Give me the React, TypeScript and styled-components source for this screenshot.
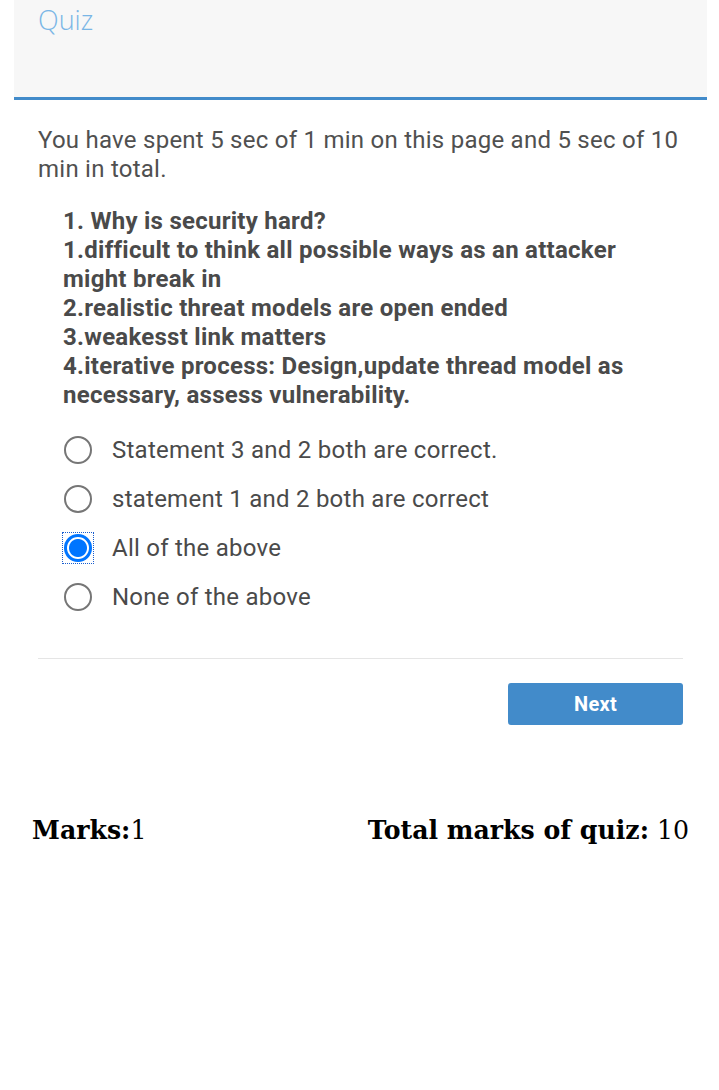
import React, { useState } from "react";
import styled, { createGlobalStyle } from "styled-components";

const GlobalStyle = createGlobalStyle`
  html, body {
    margin: 0;
    padding: 0;
    background: #ffffff;
  }
  body {
    font-family: Roboto, "Noto Sans", sans-serif;
  }
`;

const Page = styled.div`
  width: 719px;
  min-height: 1090px;
  background: #ffffff;
`;

const Panel = styled.div`
  margin: 0 12px 0 14px;
`;

const Header = styled.div`
  height: 97px;
  background: #f7f7f7;
  border-bottom: 3px solid #428bca;
  padding: 0 24px;
  box-sizing: content-box;
`;

const Title = styled.h1`
  margin: 0;
  padding-top: 2px;
  font-family: "Open Sans", sans-serif;
  font-weight: 300;
  font-size: 27px;
  line-height: 36px;
  color: #7ab6e6;
`;

const Body = styled.div`
  padding: 26px 24px 0;
`;

const Timer = styled.p`
  margin: 0;
  font-size: 24px;
  letter-spacing: 0.25px;
  line-height: 29px;
  color: #505050;
`;

const Question = styled.div`
  margin: 23px 0 0 25px;
  font-size: 24px;
  letter-spacing: 0.26px;
  line-height: 29px;
  font-weight: 700;
  color: #4a4a4a;
`;

const Options = styled.div`
  margin: 15px 0 0 25px;
  display: flex;
  flex-direction: column;
`;

const OptionRow = styled.label`
  display: flex;
  align-items: center;
  height: 49px;
  gap: 19px;
  font-size: 24px;
  letter-spacing: 0.25px;
  color: #4a4a4a;
  cursor: pointer;
`;

const RadioBox = styled.span`
  display: flex;
  padding: 1px;
  flex: none;

  &:focus-within {
    outline: 1px dotted #1a5fd0;
  }
`;

const Radio = styled.input`
  appearance: none;
  margin: 0;
  width: 28px;
  height: 28px;
  border-radius: 50%;
  border: 2px solid #767676;
  box-sizing: border-box;
  background: #fff;
  outline: none;

  &:checked {
    border: 3px solid #0075ff;
    background: radial-gradient(circle, #0075ff 0 8.5px, #ffffff 9.5px);
  }
`;

const Divider = styled.hr`
  margin: 37px 0 0;
  border: none;
  border-top: 1px solid #e5e5e5;
  height: 0;
`;

const Actions = styled.div`
  display: flex;
  justify-content: flex-end;
  margin-top: 24px;
`;

const NextButton = styled.button`
  width: 175px;
  height: 42px;
  border: none;
  border-radius: 3px;
  background: #428bca;
  color: #ffffff;
  font-family: Roboto, sans-serif;
  font-weight: 700;
  font-size: 20px;
  letter-spacing: 0.3px;
  cursor: pointer;
`;

const Footer = styled.div`
  display: flex;
  justify-content: space-between;
  align-items: baseline;
  margin-top: 90px;
  padding: 0 30px 0 32px;
  font-family: "DejaVu Serif", serif;
  font-size: 25.2px;
  color: #000;
`;

const Label = styled.b`
  font-weight: 700;
`;

const options = [
  "Statement 3 and 2 both are correct.",
  "statement 1 and 2 both are correct",
  "All of the above",
  "None of the above",
];

export default function App() {
  const [selected, setSelected] = useState(2);
  return (
    <Page>
      <GlobalStyle />
      <Panel>
        <Header>
          <Title>Quiz</Title>
        </Header>
        <Body>
          <Timer>
            You have spent 5 sec of 1 min on this page and 5 sec of 10 min in
            total.
          </Timer>
          <Question>
            1. Why is security hard?
            <br />
            1.difficult to think all possible ways as an attacker might break
            in
            <br />
            2.realistic threat models are open ended
            <br />
            3.weakesst link matters
            <br />
            4.iterative process: Design,update thread model as necessary,
            assess vulnerability.
          </Question>
          <Options>
            {options.map((o, i) => (
              <OptionRow key={o}>
                <RadioBox>
                  <Radio
                    type="radio"
                    name="answer"
                    checked={selected === i}
                    onChange={() => setSelected(i)}
                    autoFocus={i === 2}
                  />
                </RadioBox>
                {o}
              </OptionRow>
            ))}
          </Options>
          <Divider />
          <Actions>
            <NextButton>Next</NextButton>
          </Actions>
        </Body>
      </Panel>
      <Footer>
        <span>
          <Label>Marks:</Label>1
        </span>
        <span>
          <Label>Total marks of quiz:</Label> 10
        </span>
      </Footer>
    </Page>
  );
}
